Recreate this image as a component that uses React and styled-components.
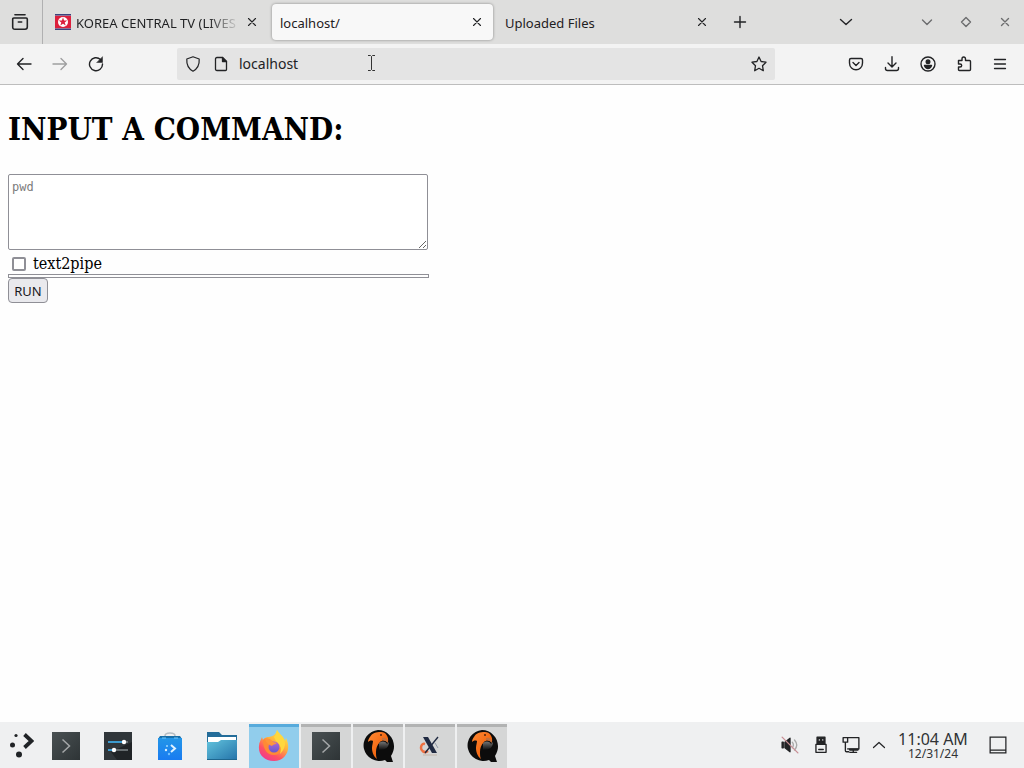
import React from "react";
import styled, { createGlobalStyle, css } from "styled-components";

const GlobalStyle = createGlobalStyle`
  * { box-sizing: border-box; }
  body { margin: 0; background: #fefefe; color: #1f2022; font-family: "Noto Sans", sans-serif; }
  button { font: inherit; color: inherit; }
`;

const Desktop = styled.div`
  display: flex;
  flex-direction: column;
  min-height: 100vh;
`;

/* Browser chrome */
const TabStrip = styled.header`
  display: flex;
  align-items: center;
  height: 44px;
  background: #dededd;
`;

const IconButton = styled.button`
  display: flex;
  align-items: center;
  justify-content: center;
  flex: none;
  width: ${(p) => p.$width || 36}px;
  height: 36px;
  padding: 0;
  border: 0;
  background: none;
  color: ${(p) => (p.$muted ? "#6c6d6e" : "#222325")};
  opacity: ${(p) => (p.$disabled ? 0.4 : 1)};
`;

const RecentTabs = styled.div`
  display: flex;
  align-items: center;
  justify-content: flex-end;
  flex: none;
  width: 43px;
  height: 44px;
  padding-right: 4px;
  border-right: 1px solid #b0b0b1;
`;

const Tabs = styled.div`
  display: flex;
  flex: 0 1 677px;
  min-width: 0;
  gap: 4px;
  padding: 0 2px 0 4px;
`;

const Tab = styled.div`
  display: flex;
  align-items: center;
  flex: 1 1 0;
  min-width: 0;
  height: 36px;
  padding: 0 4px 0 8px;
  gap: 5px;
  border-radius: 4px;
  font-size: 13px;
  ${(p) =>
    p.$active &&
    css`
      background: #f8f8f8;
      box-shadow: 0 0 3px rgba(0, 0, 0, 0.4);
    `}
`;

const TabTitle = styled.span`
  flex: 1;
  min-width: 0;
  padding-top: 2px;
  overflow: hidden;
  white-space: nowrap;
  line-height: 20px;
  ${(p) => p.$fade && css`mask-image: linear-gradient(to left, transparent, #000 32px);`}
`;

const TabClose = styled(IconButton)`
  width: 24px;
  margin-left: -5px;
`;

const Spacer = styled.div`
  flex: 1;
`;

const WindowControls = styled.div`
  display: flex;
  flex: none;
  padding-left: 43px;
`;

const Toolbar = styled.nav`
  display: flex;
  align-items: center;
  height: 41px;
  padding: 0 6px;
  background: #f3f3f3;
  border-bottom: 1px solid #bdbdbd;
`;

const AddressBar = styled.div`
  position: relative;
  display: flex;
  align-items: center;
  flex: 1;
  min-width: 0;
  height: 32px;
  margin: 0 63px;
  padding-left: 2px;
  background: #e4e4e4;
  border-radius: 2px;
`;

const AddressInput = styled.input`
  flex: 1;
  min-width: 0;
  height: 30px;
  margin-bottom: 2px;
  padding: 0 4px;
  border: 0;
  outline: 0;
  background: none;
  color: #222325;
  font: 14px "Noto Sans", sans-serif;
`;

const Pointer = styled.svg`
  position: absolute;
  left: 190px;
  top: 6px;
`;

/* Page */
const Page = styled.main`
  flex: 1;
  padding: 0 8px;
  color: #000;
  font-family: "DejaVu Serif Condensed", "DejaVu Serif", serif;
`;

const Heading = styled.h1`
  margin: 23px 0;
  font-size: 31px;
  line-height: 43px;
  font-weight: 700;
`;

const CommandForm = styled.form`
  display: flex;
  flex-direction: column;
  align-items: flex-start;
`;

const CommandBox = styled.textarea`
  width: 420px;
  max-width: 100%;
  height: 76px;
  padding: 4px 3px;
  border: 1px solid #8f8f96;
  border-radius: 2px;
  background: #fff;
  font: 12px/16px "DejaVu Sans Mono", monospace;
  &::placeholder { color: #7c7c7c; }
`;

const Option = styled.label`
  display: flex;
  align-items: center;
  gap: 7px;
  height: 24px;
  padding: 3px 0 0 4px;
  font-size: 16px;
  line-height: 20px;
`;

const Checkbox = styled.input`
  appearance: none;
  width: 14px;
  height: 14px;
  margin: 0;
  border: 2px solid #8f8f96;
  border-radius: 2px;
  background: #fff;
`;

const Output = styled.div`
  width: 421px;
  max-width: 100%;
  height: 4px;
  border: 1px solid #8f8f96;
`;

const RunButton = styled.button`
  width: 40px;
  height: 25px;
  padding: 1px 0 0;
  border: 1px solid #8f8f96;
  border-radius: 4px;
  background: #e9e9ed;
  color: #18181c;
  font-family: "Noto Sans", sans-serif;
  font-size: 13px;
  line-height: 20px;
`;

/* Desktop panel */
const Panel = styled.footer`
  display: flex;
  align-items: center;
  height: 46px;
  background: #eff0f1;
`;

const Tasks = styled.div`
  display: flex;
  align-self: flex-end;
  gap: 2px;
`;

const Task = styled.button`
  display: flex;
  align-items: center;
  justify-content: center;
  width: 50px;
  height: 44px;
  padding: 0 0 3px;
  border: 0;
  border-top: 3px solid ${(p) => (p.$state === "active" ? "#57abdc" : p.$state === "open" ? "#b2b3b3" : "transparent")};
  background: ${(p) => (p.$state === "active" ? "#91cdec" : p.$state === "open" ? "#d5d6d6" : "transparent")};
`;

const TaskIcon = styled.svg`
  flex: none;
`;

const Tray = styled.div`
  display: flex;
  align-items: center;
  margin-left: auto;
  padding-right: 8px;
`;

const Clock = styled.time`
  display: flex;
  flex-direction: column;
  align-items: center;
  width: 82px;
  margin-right: 6px;
  color: #303335;
  font-size: 16px;
  line-height: 18px;
`;

const ClockDate = styled.span`
  font-size: 12px;
  line-height: 12px;
`;

const Line = ({ size = 16, w = 1.4, children, ...rest }) => (
  <svg width={size} height={size} viewBox="0 0 16 16" fill="none" stroke="currentColor" strokeWidth={w} strokeLinecap="round" strokeLinejoin="round" aria-hidden="true" {...rest}>
    {children}
  </svg>
);

const CloseIcon = () => <Line w={1.1}><path d="m4.500 4.500 7 7M11.500 4.500l-7 7" /></Line>;

const Favicon = () => (
  <svg width="16" height="16" viewBox="0 0 16 16" aria-hidden="true">
    <path fill="#3b437d" d="M0 0h16v16H0z" />
    <path fill="#e9a3b0" d="M0 1.500h16v13H0z" />
    <path fill="#dc203d" d="M0 2h16v12H0z" />
    <circle cx="8" cy="8" r="5" fill="#fff" />
    <path fill="#dc203d" d="m8 3.600 1.100 3h3.100L9.700 8.500l1 3.100L8 9.800l-2.700 1.800 1-3.100-2.500-1.900h3.100z" />
  </svg>
);

const TerminalIcon = () => (
  <TaskIcon width="28" height="28" viewBox="0 0 28 28" aria-hidden="true">
    <defs><linearGradient id="term" x2="1" y2="1"><stop stopColor="#4a5153" /><stop offset="1" stopColor="#2e3436" /></linearGradient></defs>
    <path fill="url(#term)" d="M0 0h28v28H0z" />
    <path fill="none" stroke="#a4a7a8" strokeWidth="1.5" d="m10.500 7.500 7 6.500-7 6.500" />
  </TaskIcon>
);

const SettingsIcon = () => (
  <TaskIcon width="28" height="28" viewBox="0 0 28 28" aria-hidden="true">
    <path fill="#30363a" d="M0 0h28v28H0z" />
    <path fill="#202427" d="M7 20 28 10v18H13z" />
    <path stroke="#3c9bcf" strokeWidth="2" d="M4 10h16M4 18h6" />
    <path stroke="#7d8589" strokeWidth="1.500" d="M20 10h4M10 18h14" />
    <circle cx="20" cy="10" r="2.200" fill="#fff" /><circle cx="10" cy="18" r="2.200" fill="#fff" />
  </TaskIcon>
);

const StoreIcon = () => (
  <TaskIcon width="28" height="30" viewBox="0 0 28 30" aria-hidden="true">
    <defs><linearGradient id="store" x2="0" y2="1"><stop stopColor="#2396e8" /><stop offset="1" stopColor="#197bf1" /></linearGradient></defs>
    <path fill="none" stroke="#b5bdc3" strokeWidth="1.500" d="M9 7V5q0-3 5-3t5 3v2" />
    <path fill="#176ea8" d="M4 5h20l2 3H2z" /><path fill="url(#store)" d="M2 7h24v22H2z" />
    <path stroke="#75c9fa" strokeWidth="1" d="M6 7h4M18 7h4" />
    <path fill="none" stroke="#dff2ff" strokeWidth="2" d="m15 14 4 3.500-4 3.500" />
    <circle cx="11" cy="15" r="1" fill="#9cd9ff" /><circle cx="10" cy="19" r="1.200" fill="#dff2ff" /><circle cx="13" cy="23" r="1.200" fill="#70bfff" />
  </TaskIcon>
);

const FolderIcon = () => (
  <TaskIcon width="30" height="28" viewBox="0 0 30 28" aria-hidden="true">
    <defs><linearGradient id="folder" x2="1" y2="1"><stop stopColor="#62c3dd" /><stop offset="1" stopColor="#2473a9" /></linearGradient></defs>
    <path fill="#236c99" d="M0 0h12l3 3h15v8H0z" /><path fill="#fff" d="M1 5h28v8H1z" />
    <path fill="url(#folder)" d="M0 10h11l3-2h16v20H0z" /><path fill="#1e668e" d="M0 27h30v1H0z" />
  </TaskIcon>
);

const FirefoxIcon = () => (
  <TaskIcon width="32" height="32" viewBox="0 0 32 32" aria-hidden="true">
    <defs>
      <linearGradient id="fox" x1=".8" x2=".2" y2="1"><stop stopColor="#fff044" /><stop offset=".4" stopColor="#ffb13c" /><stop offset=".72" stopColor="#ff5263" /><stop offset="1" stopColor="#ed3595" /></linearGradient>
      <linearGradient id="globe" x2="0" y2="1"><stop stopColor="#b368cd" /><stop offset="1" stopColor="#6558cf" /></linearGradient>
    </defs>
    <path fill="url(#fox)" d="M19 0c1 3 5 5 7 9l1 2 1-3c6 12-1 23-12 23C6 31 0 24 1 16c0-4 2-6 3-9l1 3c2-3 4-3 6-3 2-1 6 0 8-7Z" />
    <path fill="#ff8a35" d="M5 10c3-2 5-2 9 1l6 2c-3 0-4 2-6 2 3 6 10 4 10-2 3 7-2 12-8 12C9 25 5 19 5 10Z" />
    <circle cx="16" cy="17" r="5.500" fill="url(#globe)" />
    <path fill="#ff9639" d="M7 9c4-1 6 1 8 3l4 1c-2 2-4 1-5 3-3-1-6-3-7-7Z" />
    <path fill="#ffd83e" d="M19 0c1 3 5 5 7 9 3 6-1 12-4 15 2-6 0-10-4-13l-2-4c2-2 3-4 3-7Z" />
  </TaskIcon>
);

const QemuIcon = () => (
  <TaskIcon width="34" height="34" viewBox="0 0 34 34" aria-hidden="true">
    <defs>
      <linearGradient id="bird" x2="1" y2="1"><stop stopColor="#ff8a35" /><stop offset=".6" stopColor="#f36812" /><stop offset="1" stopColor="#ff944a" /></linearGradient>
      <linearGradient id="shine" x2="0" y2="1"><stop stopColor="#8d8d8d" /><stop offset="1" stopColor="#0c0c0c" /></linearGradient>
    </defs>
    <path fill="#0c0c0c" d="M17 1a16 15.500 0 1 0 7 30l2 2h6l-2-6C38 15 29 1 17 1Z" />
    <path fill="url(#shine)" d="M18 14c3-2 6-2 8 1l2-2c0 5-3 8-10 8Z" opacity=".8" />
    <path fill="url(#bird)" d="M9 8C11 4 15 3 20 3c5 0 8 5 7 10-3-2-6-2-8 0-3 3-4 6-4 10 0 3 0 5 1 7-4-3-5-8-5-11 0-3 1-5 1-7-2-1-4 0-5 1 0-2 1-4 2-5Z" />
    <circle cx="20" cy="6" r="1" fill="#4c2410" /><path fill="#c2703c" d="M21 9c3-1 6 1 6 5-2-2-4-3-6-3Z" />
  </TaskIcon>
);

const XIcon = () => (
  <TaskIcon width="24" height="24" viewBox="0 0 24 24" aria-hidden="true">
    <path fill="none" stroke="#ee7042" strokeWidth="2.500" d="M7 10C4 9 3 12 3 14s3 6 7 3" />
    <path fill="#202a42" d="M5 3h5l9 16h-5z" />
    <path stroke="#202a42" strokeWidth="1.300" d="M20 3 7 19" />
    <path stroke="#929baa" d="m17 9 3 5" /><path stroke="#c2b5aa" d="M5 21h14" />
  </TaskIcon>
);

const LauncherIcon = () => (
  <svg width="26" height="26" viewBox="0 0 26 26" aria-hidden="true">
    <circle cx="8" cy="3.500" r="1.600" fill="#202326" /><circle cx="4.500" cy="13" r="2.500" fill="#202326" /><circle cx="11" cy="22.500" r="3" fill="#202326" />
    <path fill="none" stroke="#202326" strokeWidth="3.800" d="m16.500 2.500 7 6.500-7 6.500" />
  </svg>
);

const tasks = [
  ["Konsole", TerminalIcon],
  ["System Settings", SettingsIcon],
  ["Discover", StoreIcon],
  ["Dolphin", FolderIcon],
  ["Firefox", FirefoxIcon, "active"],
  ["Terminal window", TerminalIcon, "open"],
  ["QEMU", QemuIcon, "open"],
  ["X window", XIcon, "open"],
  ["QEMU window", QemuIcon, "open"],
];

const tabs = [
  { title: "KOREA CENTRAL TV (LIVES", icon: true },
  { title: "localhost/", active: true },
  { title: "Uploaded Files" },
];

export default function App() {
  return (
    <Desktop>
      <GlobalStyle />
      <TabStrip>
        <RecentTabs>
          <IconButton aria-label="Recent browsing">
            <Line size={18}><path d="M3.500 1.500h9M2.500 4.500h11q1 0 1 1v7q0 2-2 2h-9q-2 0-2-2v-7q0-1 1-1ZM6.500 8h3" /></Line>
          </IconButton>
        </RecentTabs>
        <Tabs>
          {tabs.map((tab) => (
            <Tab key={tab.title} $active={tab.active}>
              {tab.icon && <Favicon />}
              <TabTitle $fade={tab.icon}>{tab.title}</TabTitle>
              <TabClose $width={24} aria-label="Close tab"><CloseIcon /></TabClose>
            </Tab>
          ))}
        </Tabs>
        <IconButton $width={40} aria-label="New tab"><Line><path d="M8 2.500v11M2.500 8h11" /></Line></IconButton>
        <Spacer />
        <IconButton aria-label="List all tabs"><Line><path d="m2.500 5.500 5.500 5 5.500-5" /></Line></IconButton>
        <WindowControls>
          <IconButton $width={39} $muted aria-label="Minimize"><Line><path d="m3.500 6 4.500 4.500L12.500 6" /></Line></IconButton>
          <IconButton $width={39} $muted aria-label="Maximize"><Line><path d="m8 3.500 4.500 4.500L8 12.500 3.500 8Z" /></Line></IconButton>
          <IconButton $width={39} $muted aria-label="Close window"><Line><path d="m4.500 4.500 7 7M11.500 4.500l-7 7" /></Line></IconButton>
        </WindowControls>
      </TabStrip>
      <Toolbar>
        <IconButton aria-label="Back"><Line><path d="M15 8H1.500M7 2.500 1.500 8 7 13.500" /></Line></IconButton>
        <IconButton $disabled aria-label="Forward"><Line><path d="M1 8h13.500M9 2.500 14.500 8 9 13.500" /></Line></IconButton>
        <IconButton aria-label="Reload"><Line><path d="M12.500 3.500A6.500 6.500 0 1 0 14.500 8" /><path fill="currentColor" strokeWidth=".5" d="M14.500 1v5.500H9Z" /></Line></IconButton>
        <AddressBar>
          <IconButton $width={28} aria-label="Tracking protection"><Line w={1.200}><path d="m8 .8 6.200 2.200c.4 6-1.200 9.500-6.200 12.200C3 12.500 1.400 9 1.800 3Z" /></Line></IconButton>
          <IconButton $width={28} aria-label="Site information"><Line w={1.300}><path d="M4 1.500h5.500L13.500 5.500v8q0 1-1 1h-8.500q-1.500 0-1.500-1.500V3Q2.500 1.500 4 1.500Z" /><path fill="currentColor" d="M9.500 1.500v4h4Z" /></Line></IconButton>
          <AddressInput aria-label="Address" defaultValue="localhost" />
          <IconButton $width={32} aria-label="Bookmark"><Line w={1.300}><path d="m8 1 2.100 4.500 4.900.7-3.500 3.500.8 5L8 12.300l-4.300 2.400.8-5L1 6.200l4.900-.7Z" /></Line></IconButton>
          <Pointer width="9" height="18" viewBox="0 0 9 18" fill="none" stroke="#333" aria-hidden="true">
            <path d="M1 1.500h2.500l1 1 1-1H8M4.500 2.500v13M1 16.500h2.500l1-1 1 1H8" />
          </Pointer>
        </AddressBar>
        <IconButton aria-label="Save to Pocket"><Line><path d="M3 2.500h10q1.500 0 1.500 1.500v3c0 9-13 9-13 0V4Q1.500 2.500 3 2.500ZM5 6.500l3 3 3-3" /></Line></IconButton>
        <IconButton aria-label="Downloads"><Line><path d="M8 .8v10M4 7l4 4 4-4M1.500 11.500v1q0 2 2 2h9q2 0 2-2v-1" /></Line></IconButton>
        <IconButton aria-label="Account"><Line><circle cx="8" cy="8" r="7" /><circle cx="8" cy="5.800" r="1.800" fill="currentColor" /><path fill="currentColor" d="M4.500 9.500h7q-1 3-3.500 3t-3.500-3Z" /></Line></IconButton>
        <IconButton aria-label="Extensions"><Line><path d="M2.500 4.500H6V3q0-2 1.700-2T9.500 3v1.500h4q1 0 1 1v8q0 1-1 1h-10q-1 0-1-1V11H4q1.700 0 1.700-1.500T4 8H2.500Z" /></Line></IconButton>
        <IconButton aria-label="Menu"><Line w={1.300}><path d="M2.500 3.500h11M2.500 8h11M2.500 12.500h11" /></Line></IconButton>
      </Toolbar>
      <Page>
        <Heading>INPUT A COMMAND:</Heading>
        <CommandForm onSubmit={(e) => e.preventDefault()}>
          <CommandBox aria-label="Command" placeholder="pwd" />
          <Option><Checkbox type="checkbox" />text2pipe</Option>
          <Output />
          <RunButton type="submit">RUN</RunButton>
        </CommandForm>
      </Page>
      <Panel>
        <IconButton $width={41} aria-label="Application launcher"><LauncherIcon /></IconButton>
        <Tasks>
          {tasks.map(([name, Icon, state]) => (
            <Task key={name} $state={state} aria-label={name}><Icon /></Task>
          ))}
        </Tasks>
        <Tray>
          <IconButton $width={32} aria-label="Muted">
            <Line size={18} w={1.200}>
              <path fill="currentColor" d="M1 5.500h1v5H1ZM3.500 5.500 8 2v12l-4.500-3.500Z" />
              <path stroke="#aaa" d="M10 5.500q2 2.500 0 5M12 3.500q4 4.500 0 9" /><path stroke="#c99096" d="m1 1 14 14" />
            </Line>
          </IconButton>
          <IconButton $width={30} aria-label="Removable devices">
            <Line size={18} w={1.200}><path fill="currentColor" d="M4.500 1h7v6h-7Z" /><path d="M3.500 7.500h9v7h-9ZM6 12h4" /><path stroke="#eff0f1" d="M6.500 3.500h.1M9.500 3.500h.1" /></Line>
          </IconButton>
          <IconButton $width={30} aria-label="Network">
            <Line size={18} w={1.200}><path d="M5 1.500h10v10H5M1 1.500h4v4H1ZM3 5.500v7.500q0 1 1 1h2M7 14.500h6M10 11.500v3" /><path d="M7 12h7" strokeWidth="2" /></Line>
          </IconButton>
          <IconButton $width={26} aria-label="Show hidden icons"><Line w={1.200}><path d="m2.500 10.500 5.500-5 5.500 5" /></Line></IconButton>
          <Clock><span>11:04 AM</span><ClockDate>12/31/24</ClockDate></Clock>
          <IconButton aria-label="Show desktop"><Line size={18} w={1.100} strokeLinejoin="miter"><path d="M1 1h14v14H1ZM1 12.500h14" /></Line></IconButton>
        </Tray>
      </Panel>
    </Desktop>
  );
}
